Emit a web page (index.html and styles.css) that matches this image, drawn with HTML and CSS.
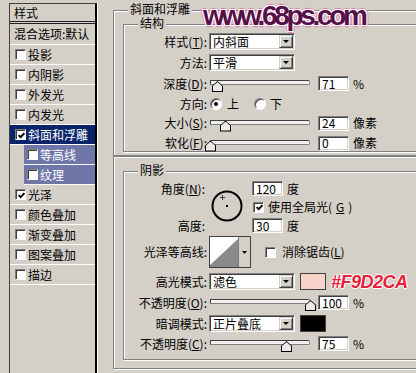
FILE: index.html
```html
<!DOCTYPE html>
<html lang="zh-CN">
<head>
    <meta charset="UTF-8">
    <title>图层样式 - 斜面和浮雕</title>
    <link rel="stylesheet" href="styles.css">
</head>
<body>
    <div class="dialog">
        <!-- left: list of layer styles -->
        <div class="style-list">
            <div class="list-head">样式</div>
            <div class="list-blend">混合选项:默认</div>
            <div class="list-item"><span class="check"></span>投影</div>
            <div class="list-item"><span class="check"></span>内阴影</div>
            <div class="list-item"><span class="check"></span>外发光</div>
            <div class="list-item"><span class="check"></span>内发光</div>
            <div class="list-item active"><span class="check"><svg width="7" height="7" viewBox="0 0 7 7"><path d="M0.6 3.2 L2.6 5.2 L6.4 1.2" stroke="#000" stroke-width="1.8" fill="none"/></svg></span>斜面和浮雕</div>
            <div class="list-item sub"><span class="check"></span>等高线</div>
            <div class="list-item sub"><span class="check"></span>纹理</div>
            <div class="list-item"><span class="check"><svg width="7" height="7" viewBox="0 0 7 7"><path d="M0.6 3.2 L2.6 5.2 L6.4 1.2" stroke="#000" stroke-width="1.8" fill="none"/></svg></span>光泽</div>
            <div class="list-item"><span class="check"></span>颜色叠加</div>
            <div class="list-item"><span class="check"></span>渐变叠加</div>
            <div class="list-item"><span class="check"></span>图案叠加</div>
            <div class="list-item"><span class="check"></span>描边</div>
        </div>

        <!-- right: bevel and emboss settings -->
        <div class="settings">
            <fieldset class="group">
                <legend>斜面和浮雕</legend>
                <fieldset class="subgroup structure">
                    <legend>结构</legend>
                    <div class="row first">
                        <label>样式(<u>T</u>):</label>
                        <div class="select"><span>内斜面</span><i class="drop"></i></div>
                    </div>
                    <div class="row">
                        <label>方法:</label>
                        <div class="select"><span>平滑</span><i class="drop"></i></div>
                    </div>
                    <div class="row">
                        <label>深度(<u>D</u>):</label>
                        <div class="slider"><div class="track"></div><div class="thumb" style="left:2px"></div></div>
                        <span class="field">71</span><span class="unit">%</span>
                    </div>
                    <div class="row tight">
                        <label>方向:</label>
                        <span class="radio on"></span><span class="radio-text">上</span>
                        <span class="radio second"></span><span class="radio-text near">下</span>
                    </div>
                    <div class="row tight short">
                        <label>大小(<u>S</u>):</label>
                        <div class="slider"><div class="track"></div><div class="thumb" style="left:10px"></div></div>
                        <span class="field">24</span><span class="unit">像素</span>
                    </div>
                    <div class="row short">
                        <label>软化(<u>F</u>):</label>
                        <div class="slider"><div class="track"></div><div class="thumb" style="left:-5px"></div></div>
                        <span class="field">0</span><span class="unit">像素</span>
                    </div>
                </fieldset>
            </fieldset>

            <fieldset class="group group-shade">
                <fieldset class="subgroup shading">
                    <legend>阴影</legend>
                    <div class="angle-block">
                        <label class="angle-label">角度(<u>N</u>):</label>
                        <div class="dial">
                            <svg width="34" height="34" viewBox="0 0 34 34">
                                <circle cx="17" cy="17" r="14.5" fill="none" stroke="#000" stroke-width="2"/>
                                <rect x="16" y="16" width="2" height="2" fill="#000"/>
                                <path d="M12.5 6v5M10 8.5h5" stroke="#404040" stroke-width="1"/>
                            </svg>
                        </div>
                        <div class="angle-field"><span class="field">120</span><span class="unit">度</span></div>
                        <div class="global-light"><span class="check"><svg width="7" height="7" viewBox="0 0 7 7"><path d="M0.6 3.2 L2.6 5.2 L6.4 1.2" stroke="#000" stroke-width="1.8" fill="none"/></svg></span>使用全局光(<u>G</u>)</div>
                        <label class="height-label">高度:</label>
                        <div class="height-field"><span class="field">30</span><span class="unit">度</span></div>
                    </div>
                    <div class="row contour-row">
                        <label>光泽等高线:</label>
                        <div class="contour">
                            <svg width="42" height="32" viewBox="0 0 42 32">
                                <rect x="0.5" y="0.5" width="41" height="31" fill="#fff" stroke="#404040"/>
                                <path d="M1 29 L29 3 V31 H1 Z" fill="#8a8a8a"/>
                                <rect x="30" y="1" width="11" height="30" fill="#d4d0c8"/>
                                <path d="M29.5 1V31" stroke="#808080"/>
                                <path d="M33 15h5l-2.5 3z" fill="#000"/>
                            </svg>
                        </div>
                        <span class="check plain"></span><span class="check-text">消除锯齿(<u>L</u>)</span>
                    </div>
                    <div class="row mode-row">
                        <label>高光模式:</label>
                        <div class="select"><span>滤色</span><i class="drop"></i></div>
                        <span class="swatch pink"></span>
                        <span class="hex">#F9D2CA</span>
                    </div>
                    <div class="row">
                        <label>不透明度(<u>O</u>):</label>
                        <div class="slider"><div class="track"></div><div class="thumb" style="left:95px"></div></div>
                        <span class="field">100</span><span class="unit">%</span>
                    </div>
                    <div class="row">
                        <label>暗调模式:</label>
                        <div class="select"><span>正片叠底</span><i class="drop"></i></div>
                        <span class="swatch black"></span>
                    </div>
                    <div class="row tight">
                        <label>不透明度(<u>C</u>):</label>
                        <div class="slider"><div class="track"></div><div class="thumb" style="left:71px"></div></div>
                        <span class="field">75</span><span class="unit">%</span>
                    </div>
                </fieldset>
            </fieldset>
        </div>

        <div class="watermark">www.68ps.com</div>
    </div>
</body>
</html>
```

FILE: styles.css
```css
* {
    margin: 0;
    padding: 0;
    box-sizing: border-box;
}

:root {
    --face: #d4d0c8;
    --shadow: #808080;
    --dark: #404040;
    --light: #ffffff;
    --navy: #0a246a;
    --sub-blue: #6f77a9;
}

body {
    width: 416px;
    height: 373px;
    overflow: hidden;
    background: var(--face);
    color: #000;
    font-family: "Noto Sans CJK SC", "Noto Sans", sans-serif;
    font-size: 12px;
    line-height: 14px;
}

u {
    text-decoration: underline;
    text-underline-offset: 1px;
}

.dialog {
    position: relative;
    display: flex;
    height: 373px;
}

/* style list */

.style-list {
    flex: none;
    width: 88px;
    height: 380px;
    margin: 3px 0 0 9px;
    border-top: 1px solid var(--dark);
    border-left: 1px solid var(--dark);
    border-right: 2px solid #000;
    box-shadow: 1px 0 0 var(--light);
}

.list-head {
    display: flex;
    align-items: center;
    height: 20px;
    padding-left: 4px;
    border-bottom: 3px double #202020;
}

.list-blend {
    display: flex;
    align-items: center;
    height: 21px;
    padding-left: 4px;
    white-space: nowrap;
    overflow: hidden;
    border-bottom: 1px solid var(--light);
}

.list-item {
    display: flex;
    align-items: center;
    gap: 2px;
    height: 20px;
    padding-left: 5px;
    border-bottom: 1px solid var(--light);
}

.list-item.active {
    background: var(--navy);
    color: #fff;
}

.list-item.sub {
    margin-left: 14px;
    padding-left: 3px;
    background: var(--sub-blue);
    color: #fff;
}

.check {
    flex: none;
    display: flex;
    align-items: center;
    justify-content: center;
    width: 11px;
    height: 11px;
    background: #fff;
    border-top: 1px solid var(--shadow);
    border-left: 1px solid var(--shadow);
    border-right: 1px solid var(--light);
    border-bottom: 1px solid var(--light);
    box-shadow: inset 1px 1px 0 var(--dark);
}

.check svg {
    display: block;
    margin: 1px 0 0 1px;
}

/* settings groups */

.settings {
    flex: none;
    width: 330px;
    margin-left: 16px;
    padding-top: 4px;
}

.group,
.subgroup {
    min-width: 0;
    border: 1px solid var(--shadow);
    box-shadow: inset 1px 1px 0 var(--light), 1px 1px 0 var(--light);
}

.group {
    padding: 0 0 3px 0;
}

.group-shade {
    padding-bottom: 8px;
}

.subgroup {
    margin-left: 9px;
    padding: 3px 0 0 0;
}

.structure {
    margin-top: 2px;
}

legend {
    margin-left: 14px;
    padding: 0 2px;
    font-family: "Liberation Sans", "Noto Sans CJK SC", sans-serif;
    line-height: 12px;
    background: var(--face);
}

.shading {
    margin-top: 8px;
    padding-bottom: 7px;
}

.row {
    display: flex;
    align-items: center;
    height: 17px;
    margin-top: 4px;
}

.row.first {
    margin-top: 0;
}

.row.tight {
    margin-top: 3px;
}

.row.short {
    height: 16px;
}

.row > label {
    flex: none;
    width: 83px;
    text-align: right;
    white-space: nowrap;
}

/* controls */

.select {
    flex: none;
    display: flex;
    align-items: center;
    width: 86px;
    height: 17px;
    margin-left: 2px;
    padding: 1px 1px 1px 3px;
    background: #fff;
    border-top: 1px solid var(--shadow);
    border-left: 1px solid var(--shadow);
    border-right: 1px solid var(--light);
    border-bottom: 1px solid var(--light);
    box-shadow: inset 1px 1px 0 var(--dark), inset -1px -1px 0 var(--face);
}

.select span {
    flex: 1;
    line-height: 13px;
}

.drop {
    flex: none;
    display: flex;
    align-items: center;
    justify-content: center;
    width: 14px;
    height: 13px;
    background: var(--face);
    border-top: 1px solid var(--face);
    border-left: 1px solid var(--face);
    border-right: 1px solid var(--dark);
    border-bottom: 1px solid var(--dark);
    box-shadow: inset 1px 1px 0 var(--light), inset -1px -1px 0 var(--shadow);
}

.drop::after {
    content: "";
    border-left: 3px solid transparent;
    border-right: 3px solid transparent;
    border-top: 3px solid #000;
}

.slider {
    flex: none;
    position: relative;
    width: 100px;
    height: 17px;
    margin: 0 8px 0 3px;
    padding-top: 5px;
}

.track {
    height: 5px;
    background: #f2f1ee;
    border-top: 1px solid var(--dark);
    border-left: 1px solid var(--dark);
    border-right: 1px solid var(--shadow);
    border-bottom: 1px solid var(--shadow);
    border-radius: 0 2px 2px 0;
}

.thumb {
    position: absolute;
    top: 6px;
    width: 11px;
    height: 11px;
    background: #000;
    clip-path: polygon(50% 0, 100% 45%, 100% 100%, 0 100%, 0 45%);
}

.thumb::after {
    content: "";
    position: absolute;
    inset: 1px;
    background: #ecebe7;
    clip-path: polygon(50% 0, 100% 45%, 100% 100%, 0 100%, 0 45%);
}

.field {
    flex: none;
    display: flex;
    align-items: center;
    width: 31px;
    height: 15px;
    padding-left: 3px;
    background: #fff;
    border-top: 1px solid var(--shadow);
    border-left: 1px solid var(--shadow);
    border-right: 1px solid var(--light);
    border-bottom: 1px solid var(--light);
    box-shadow: inset 1px 1px 0 var(--dark), inset -1px -1px 0 var(--face);
    line-height: 12px;
}

.unit {
    margin-left: 4px;
}

.radio {
    flex: none;
    display: flex;
    align-items: center;
    justify-content: center;
    width: 12px;
    height: 12px;
    margin-left: 3px;
    border-radius: 50%;
    background: #fff;
    border: 1px solid;
    border-color: var(--shadow) var(--light) var(--light) var(--shadow);
    box-shadow: inset 1px 1px 0 var(--dark);
}

.radio.on::after {
    content: "";
    width: 4px;
    height: 4px;
    border-radius: 50%;
    background: #000;
}

.radio.second {
    margin-left: 15px;
}

.radio-text {
    margin-left: 5px;
}

.radio-text.near {
    margin-left: 4px;
}

/* shading section */

.angle-block {
    display: grid;
    grid-template-columns: 83px 45px auto;
    grid-template-rows: 15px 22px 15px;
    margin-top: 1px;
}

.angle-label,
.height-label {
    align-self: center;
    padding-right: 2px;
    text-align: right;
}

.angle-label {
    grid-column: 1;
    grid-row: 1;
}

.dial {
    grid-column: 2;
    grid-row: 1 / 4;
    margin: 8px 0 0 3px;
}

.dial svg {
    display: block;
}

.angle-field,
.height-field {
    display: flex;
    align-items: center;
    grid-column: 3;
}

.angle-field {
    grid-row: 1;
}

.global-light {
    display: flex;
    align-items: center;
    gap: 4px;
    grid-column: 3;
    grid-row: 2;
    margin-left: 1px;
}

.height-label {
    grid-column: 1;
    grid-row: 3;
}

.height-field {
    grid-row: 3;
}

.row.contour-row {
    height: 32px;
    margin-top: 3px;
}

.contour {
    flex: none;
    margin-left: 2px;
    height: 32px;
}

.contour svg {
    display: block;
}

.check.plain {
    margin-left: 14px;
}

.check-text {
    margin-left: 6px;
}

.row.mode-row {
    margin-top: 5px;
}

.swatch {
    flex: none;
    width: 26px;
    height: 17px;
    margin-left: 5px;
    border: 1px solid var(--dark);
}

.swatch.pink {
    background: #f9d2ca;
}

.swatch.black {
    background: #000;
}

.hex {
    margin-left: 5px;
    font-family: "Liberation Sans", Arial, sans-serif;
    font-size: 18px;
    font-weight: 700;
    font-style: italic;
    letter-spacing: -0.5px;
    color: #e8203c;
    text-shadow: 1px 0 0 #fff, -1px 0 0 #fff, 0 1px 0 #fff, 0 -1px 0 #fff;
}

/* watermark over the dialog */

.watermark {
    position: absolute;
    left: 203px;
    top: 2px;
    font-family: "Liberation Sans", Arial, sans-serif;
    font-size: 28px;
    font-weight: 700;
    line-height: 28px;
    letter-spacing: -3.3px;
    color: #561048;
    text-shadow: 1px 1px 0 #fff, -1px -1px 0 #fff, 1px -1px 0 #fff, -1px 1px 0 #fff,
                 2px 0 1px #e07ab0, -2px 0 1px #e07ab0, 0 2px 1px #e07ab0, 0 -2px 1px #e07ab0;
}
```
